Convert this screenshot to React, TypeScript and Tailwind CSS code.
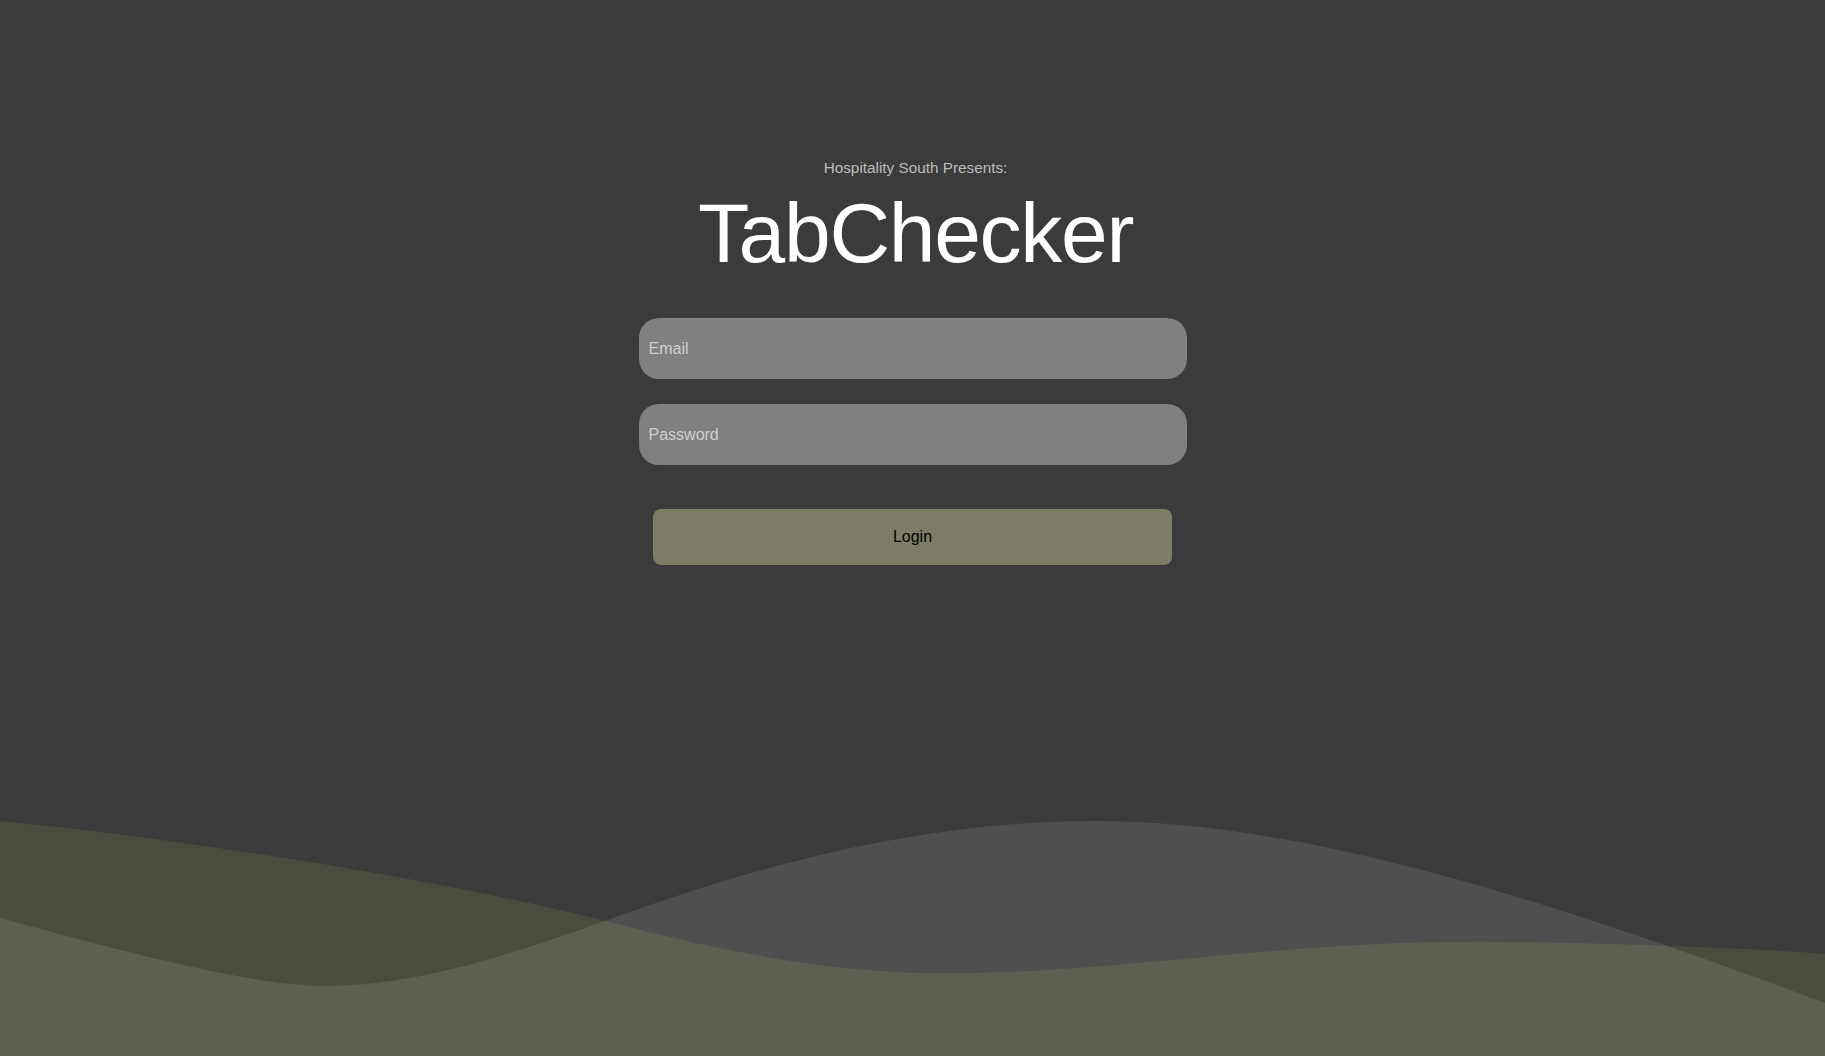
export default function App() {
  return (
    <div
      className="relative min-h-screen w-full overflow-hidden bg-[#3b3b3b]"
      style={{ fontFamily: '"Liberation Sans", Arial, sans-serif' }}
    >
      {/* Background waves */}
      <svg
        className="absolute bottom-0 left-0 h-[235px] w-full"
        viewBox="0 0 1825 235"
        preserveAspectRatio="none"
      >
        <path
          d="M0,0 C200,20 450,60 605,100 C760,140 860,155 978,152 C1150,148 1300,118 1502,121 C1650,123 1760,128 1825,133 L1825,235 L0,235 Z"
          fill="#4b4c3f"
        />
        <path
          d="M0,97 C110,127 250,165 326,165 C420,165 520,130 605,100 C720,58 900,0 1094,0 C1280,0 1500,60 1825,182 L1825,235 L0,235 Z"
          fill="#ffffff"
          fillOpacity="0.105"
        />
      </svg>

      {/* Login form */}
      <div className="relative flex flex-col items-center pt-[159px]">
        <p className="ml-[6px] text-[15.3px] leading-[18px] text-[#bdbdbd]">Hospitality South Presents:</p>
        <h1 className="ml-[6px] mt-[14px] text-[84px] leading-[84px] tracking-[-1.3px] text-white">TabChecker</h1>

        <div className="mt-[43px] flex w-[548px] flex-col gap-[25px]">
          <input
            type="email"
            placeholder="Email"
            className="h-[61px] w-full rounded-[20px] bg-[#808080] px-[10px] text-[16px] text-white outline-none placeholder:text-[#cfcfcf]"
          />
          <input
            type="password"
            placeholder="Password"
            className="h-[61px] w-full rounded-[20px] bg-[#808080] px-[10px] text-[16px] text-white outline-none placeholder:text-[#cfcfcf]"
          />
        </div>

        <button className="mt-[44px] h-[56px] w-[519px] rounded-[8px] bg-[#7d7c65] text-[16px] text-black">
          Login
        </button>
      </div>
    </div>
  );
}
